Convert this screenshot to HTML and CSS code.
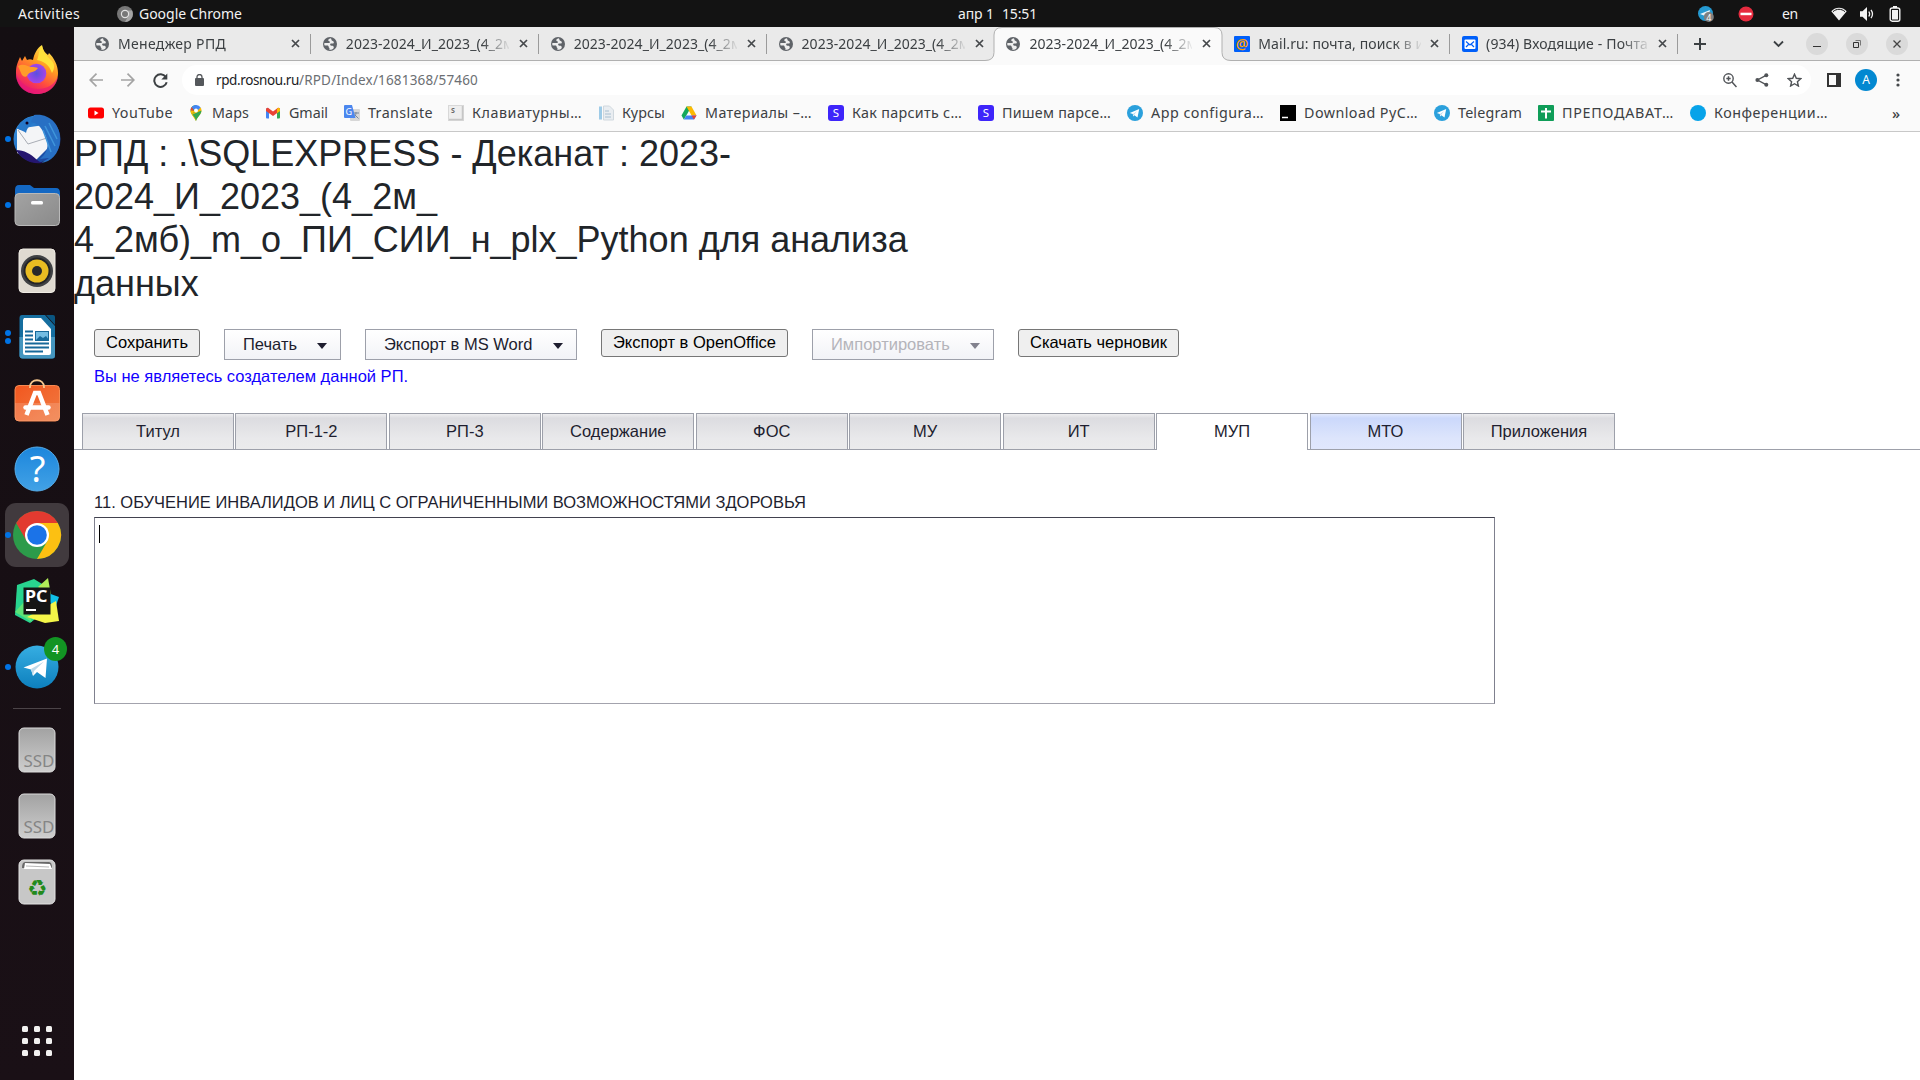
FILE: index.html
```html
<!DOCTYPE html>
<html lang="ru">
<head>
<meta charset="utf-8">
<title>РПД</title>
<link rel="stylesheet" href="styles.css">
</head>
<body>
<svg class="defs" width="0" height="0">
  <symbol id="globe" viewBox="0 0 14 14"><circle cx="7" cy="7" r="7" fill="#5f6368"/><path d="M7.6 1.2C5.8 1.6 5 2.6 5.300 3.600c.3.9 1.500.6 1.700 1.500.2.8-.9 1-1.900 1H2c-.5 0-.8.2-.8.9 0 .5.2 1 .5 1.400h2.500c1 0 1.500.6 1.500 1.500 0 .8.7.8.8 1.500.1.6-.2 1-.4 1.300 1.700.3 3.400-.4 4.500-1.500.4-1 .2-1.700-.5-2.200-.6-.4-1.600-.2-2.400-.5C6.900 8.200 7 7 7.700 6.600c.8-.5 2 .2 2.800-.3.6-.4.300-1.300 0-1.900-.3-.7-1.200-.4-1.700-1C8.300 2.800 8.600 1.700 7.600 1.200z" fill="#eee"/></symbol>
  <symbol id="close" viewBox="0 0 9 9"><path d="M1 1l7 7M8 1L1 8" stroke="#45484b" stroke-width="1.700" fill="none"/></symbol>
  <symbol id="plane" viewBox="0 0 16 16"><circle cx="8" cy="8" r="8" fill="#2ba0dc"/><path d="M2.800 8l9.400-3.900-1.700 8.400-3.100-2.300-1.300 1.300-.3-2.500z" fill="#fff"/><path d="M6 9l4-2.800-2.700 3.300-.7 1.500z" fill="#b9d9ee"/></symbol>
  <symbol id="stepik" viewBox="0 0 16 16"><rect width="16" height="16" rx="3" fill="#3e25fa"/><text x="8" y="12" text-anchor="middle" font-size="11.500" fill="#fff">S</text></symbol>
  <symbol id="ssd" viewBox="0 0 74 66"><rect x="19" y="11" width="36" height="44" rx="5" fill="url(#ssdg)" stroke="#dcdcdc"/><text x="23.500" y="50" font-size="16" textLength="31" lengthAdjust="spacingAndGlyphs" fill="#858585">SSD</text></symbol>
  <linearGradient id="ssdg" x2="0" y2="1"><stop stop-color="#a2a2a2"/><stop offset="1" stop-color="#cecece"/></linearGradient>
  <linearGradient id="ffg" x1=".8" y1="0" x2=".3" y2="1"><stop stop-color="#fff44f"/><stop offset=".4" stop-color="#ff9a22"/><stop offset=".7" stop-color="#ff4a40"/><stop offset="1" stop-color="#e3107c"/></linearGradient>
  <radialGradient id="ffp"><stop stop-color="#5b50df"/><stop offset="1" stop-color="#a544e8"/></radialGradient>
  <linearGradient id="blue" x2="0" y2="1"><stop stop-color="#1c86dc"/><stop offset="1" stop-color="#42a2e6"/></linearGradient>
  <linearGradient id="tgg" x2="0" y2="1"><stop stop-color="#36aee2"/><stop offset="1" stop-color="#0d7fbd"/></linearGradient>
  <linearGradient id="tbg" x2="1" y2="1"><stop stop-color="#3a9be8"/><stop offset=".6" stop-color="#1c5fb4"/><stop offset="1" stop-color="#1b2f8c"/></linearGradient>
  <linearGradient id="filg" x1="0" x2="1" y2="1"><stop stop-color="#a3a3a3"/><stop offset="1" stop-color="#8a8a8a"/></linearGradient>
  <linearGradient id="org" x2="1" y2="1"><stop stop-color="#f2571f"/><stop offset="1" stop-color="#f07b42"/></linearGradient>
</svg>

<header class="panel">
  <div class="panel-left">
    <span class="activities"><span data-w="62">Activities</span></span>
    <svg width="16" height="16" viewBox="0 0 16 16"><circle cx="8" cy="8" r="8" fill="#777"/><path d="M8 4.500h7A8 8 0 0 1 8 16l3.200-6z" fill="#a5a5a5"/><circle cx="8" cy="8" r="4.200" fill="#e2e2e2"/><circle cx="8" cy="8" r="3" fill="#777"/></svg>
    <span data-w="103">Google Chrome</span>
  </div>
  <div class="clock"><span data-w="36">апр 1</span><span data-w="35">15:51</span></div>
  <div class="tray">
    <svg width="16" height="16" viewBox="0 0 16 16"><circle cx="7.500" cy="7.500" r="7.500" fill="#259ad2"/><path d="M2 8l10-4-2 8-3-2z" fill="#e8f4fb"/><circle cx="10.800" cy="11" r="5" fill="#808080"/><text x="10.800" y="14.500" text-anchor="middle" font-size="9" fill="#fff">4</text></svg>
    <svg width="16" height="16" viewBox="0 0 16 16"><circle cx="8" cy="8" r="7.500" fill="#e62b3f"/><rect x="2.500" y="6.700" width="11" height="2.500" fill="#fff"/></svg>
    <span class="lang" data-w="16">en</span>
    <svg width="16" height="14" viewBox="0 0 16 14"><path d="M.3 4.200C4.800-.4 11.200-.4 15.700 4.200L8 13.500z" fill="#f2f2f2"/><path d="M2 4.700c3.500-3.200 8.500-3.200 12 0" stroke="#131313" fill="none"/></svg>
    <svg width="16" height="16" viewBox="0 0 16 16"><path d="M1 5.300h2.500L8 1v14l-4.500-4.300H1z" fill="#f2f2f2"/><path d="M9.800 5.500q1.700 2.500 0 5M12 3.800q3 4.200 0 8.400" stroke="#f2f2f2" stroke-width="1.300" fill="none"/></svg>
    <svg width="12" height="16" viewBox="0 0 12 16"><rect x="1.200" y="2" width="9.600" height="13.200" rx="2" fill="none" stroke="#f2f2f2" stroke-width="1.400"/><path d="M4 0h4v2H4zM3 4h6v9.500H3z" fill="#f2f2f2"/></svg>
  </div>
</header>

<div class="desktop">
<nav class="dock">
  <div class="app"><svg viewBox="0 0 74 66"><path d="M33 11c4 1 4 4 4 4l4-5 2-5 5 8 4 2 3 6 2 6c1 15-8 27-20 27S15 44 16 32l1-9 3-6 2 4 5-3c1-3 5-5 6-7z" fill="none"/><path d="M16 33c0-8 2-11 4-16l2 4 3-5 2 4c2-1 4-1 6 0 1-6 4-12 9-15 1 5 3 8 6 10l1-2c5 5 9 12 9 20 0 12-9 21-21 21S16 45 16 33z" fill="url(#ffg)"/><path d="M16 34c0 11 8 20 21 20 12 0 20-8 21-18-3 8-10 13-20 13S21 44 16 34z" fill="#e71878" opacity=".65"/><circle cx="36.500" cy="33.500" r="9.800" fill="url(#ffp)"/><path d="M42 6c1 6 5 10 9 14 4 4 4 8 1 13-3-9-9-12-15-13 2-4 1-9 5-14z" fill="#ffe23b"/><path d="M18 26c5-3 10 0 13 1 3 0 5 0 7 1-3 5-9 3-11 8-2 2-5 0-6-3z" fill="#ff9c2a"/></svg></div>
  <div class="app"><svg viewBox="0 0 74 66"><circle cx="37" cy="33" r="23.500" fill="url(#tbg)"/><path d="M17 23l27-4 7 20-16 16-18-8z" fill="#f4f5f7"/><path d="M18 24l10 14 19-6" fill="none" stroke="#a9adb5"/><path d="M17 22c6-11 17-15 26-7-9 0-16 5-17 12-3-3-6-2-9-5z" fill="#2678ca"/><path d="M34 9c15-2 27 9 26 26-1 13-9 21-19 22l8-5-9 1c12-10 8-22 0-32-3-4-6-4-9-5z" fill="#2870c4"/><path d="M45 20l10 20M49 17l8 16M43 24l8 22" stroke="#3f95da" stroke-width="1.500"/><path d="M16 44c8 0 15 4 20 9 2 2 4 3 7 4-13 2-23-5-27-13z" fill="#25166f"/><circle cx="27" cy="17" r="1.500" fill="#102"/></svg><i class="dot"></i></div>
  <div class="app"><svg viewBox="0 0 74 66"><path d="M15 18q0-5 4-5h11l4 3h22q4 0 4 5v10H15z" fill="#1468c3"/><rect x="15" y="21.500" width="44.500" height="32" rx="4" fill="url(#filg)" stroke="#b9b9b9"/><rect x="31" y="29" width="12" height="3.500" rx="1.500" fill="#fff"/></svg><i class="dot"></i></div>
  <div class="app"><svg viewBox="0 0 74 66"><rect x="19" y="11" width="36" height="43.500" rx="4" fill="#dfdad1" stroke="#efebe3"/><circle cx="37" cy="33" r="16" fill="#3f4144"/><circle cx="37" cy="33" r="13.500" fill="#232427"/><circle cx="37" cy="33" r="11.500" fill="#e9bc22"/><circle cx="37" cy="33" r="5" fill="#28292b"/></svg></div>
  <div class="app"><svg viewBox="0 0 74 66"><path d="M22 11h23l10 11v30q0 2.500-2.500 2.500h-30q-3 0-3-3V14q0-3 2.500-3z" fill="#166e9f"/><path d="M19.500 33h35.500v18q0 3.500-3 3.500H22.500q-3 0-3-3z" fill="#4596bf"/><path d="M24 14h17l10 11v24q0 2-2 2H25q-2 0-2-2V16z" fill="#fff"/><path d="M46 11h7q2 0 2 2v8z" fill="#0a5580"/><path d="M25 27.500h8M25 31.500h8M25 35.500h8M25 39.500h24M25 43.500h24M25 47.500h18" stroke="#17699a" stroke-width="1.800"/><rect x="35.500" y="27.500" width="13" height="9" fill="#73bce2" stroke="#17699a"/><path d="M36 36l4-4 3 2 3-2 3 4z" fill="#17699a"/></svg><i class="dot up"></i><i class="dot down"></i></div>
  <div class="app"><svg viewBox="0 0 74 66"><rect x="15" y="15.500" width="44.500" height="35.500" rx="4" fill="url(#org)" stroke="#f78a52"/><path d="M15 33h44.500v14q0 4-4 4H19q-4 0-4-4z" fill="#fff" opacity=".16"/><path d="M30 18v-1c0-9 14-9 14 0v1" fill="none" stroke="#f7c88f" stroke-width="1.800"/><path d="M26.500 45l8.500-22h4l8.500 22" fill="none" stroke="#fff" stroke-width="4.500"/><path d="M25.500 37.500h23" stroke="#fff" stroke-width="4.500" stroke-linecap="round"/></svg></div>
  <div class="app"><svg viewBox="0 0 74 66"><circle cx="37" cy="33" r="22" fill="url(#blue)" stroke="#55ace9"/><text x="37.500" y="46" text-anchor="middle" font-size="36" fill="#fff">?</text></svg></div>
  <div class="app current"><svg viewBox="0 0 74 66"><circle cx="37" cy="33" r="24" fill="#2c9b4a"/><path d="M16.200 21A24 24 0 0 1 57.800 21H37L26.600 39z" fill="#e23a30"/><path d="M57.800 21A24 24 0 0 1 37 57L47.400 39 37 21z" fill="#fcc012"/><circle cx="37" cy="33" r="12" fill="#fff"/><circle cx="37" cy="33" r="9.800" fill="#1b73e8"/></svg><i class="dot"></i></div>
  <div class="app"><svg viewBox="0 0 74 66"><path d="M17 17l17-6 13 8-4 26-13 10-15-8z" fill="#28d48f"/><path d="M38 19l10-9 3 17z" fill="#b0ec58"/><path d="M48 25l11 4-6 17z" fill="#10c1e8"/><path d="M15 44l9-10 8 20z" fill="#5ee476"/><path d="M27 49l29-16 3 20-14 2z" fill="#f4f648"/><rect x="23.500" y="19.500" width="27" height="27" fill="#151515"/><text x="25" y="34" font-size="15.500" font-weight="700" textLength="22.500" lengthAdjust="spacingAndGlyphs" fill="#fff">PC</text><path d="M26 42h10" stroke="#fff" stroke-width="2"/></svg></div>
  <div class="app"><svg viewBox="0 0 74 66"><circle cx="37" cy="33" r="21.500" fill="url(#tgg)"/><path d="M23.500 33.500L47 24.500 45.500 44l-8.500-6-4 4-2-6.500z" fill="#fff"/><path d="M31 35l13-7.500-10 9.500-1 4.500z" fill="#bcd9e9"/></svg><i class="dot"></i><b class="badge">4</b></div>
  <hr>
  <div class="app"><svg><use href="#ssd"/></svg></div>
  <div class="app"><svg><use href="#ssd"/></svg></div>
  <div class="app"><svg viewBox="0 0 74 66"><rect x="19" y="11" width="36" height="44" rx="5" fill="#c7c7c7" stroke="#e3e3e3"/><path d="M22 19q0-6 3-6h24q3 0 3 6z" fill="#686868"/><path d="M24 20l1-6 25 1 2 5z" fill="#fff"/><path d="M26 17l23 1" stroke="#999" stroke-width=".7"/><text class="recycle" x="37" y="47" text-anchor="middle" font-size="22.500" fill="#228a1c">♻</text></svg></div>
  <div class="app grid"><svg viewBox="0 0 74 66"><g fill="#f2f1f0"><rect x="22" y="18" width="6" height="6" rx="1.500"/><rect x="34" y="18" width="6" height="6" rx="1.500"/><rect x="46" y="18" width="6" height="6" rx="1.500"/><rect x="22" y="30" width="6" height="6" rx="1.500"/><rect x="34" y="30" width="6" height="6" rx="1.500"/><rect x="46" y="30" width="6" height="6" rx="1.500"/><rect x="22" y="42" width="6" height="6" rx="1.500"/><rect x="34" y="42" width="6" height="6" rx="1.500"/><rect x="46" y="42" width="6" height="6" rx="1.500"/></g></svg></div>
</nav>

<main class="browser">
  <div class="tabs">
    <div class="tab"><svg class="fav"><use href="#globe"/></svg><span class="title"><span data-w="108">Менеджер РПД</span></span><svg class="x"><use href="#close"/></svg></div>
    <div class="tab"><svg class="fav"><use href="#globe"/></svg><span class="title"><span data-w="168">2023-2024_И_2023_(4_2м</span></span><svg class="x"><use href="#close"/></svg></div>
    <div class="tab"><svg class="fav"><use href="#globe"/></svg><span class="title"><span data-w="168">2023-2024_И_2023_(4_2м</span></span><svg class="x"><use href="#close"/></svg></div>
    <div class="tab nosep"><svg class="fav"><use href="#globe"/></svg><span class="title"><span data-w="168">2023-2024_И_2023_(4_2м</span></span><svg class="x"><use href="#close"/></svg></div>
    <div class="tab nosep active"><svg class="shape" viewBox="0 0 246 34"><path d="M0 33.500Q9 33.500 9 25.500V8Q9 .5 17 .5H229Q237 .5 237 8V25.500Q237 33.500 246 33.500V34H0z" fill="#fafafa"/><path d="M0 33.500Q9 33.500 9 25.500V8Q9 .5 17 .5H229Q237 .5 237 8V25.500Q237 33.500 246 33.500" fill="none" stroke="#b0b0b0"/></svg><svg class="fav"><use href="#globe"/></svg><span class="title"><span data-w="168">2023-2024_И_2023_(4_2м</span></span><svg class="x"><use href="#close"/></svg></div>
    <div class="tab"><svg class="fav wide" viewBox="0 0 16 16"><rect width="16" height="16" rx="1" fill="#005ff9"/><text x="8" y="12.500" text-anchor="middle" font-size="14" font-weight="600" fill="#ff9e00">@</text></svg><span class="title"><span data-w="166">Mail.ru: почта, поиск в и</span></span><svg class="x"><use href="#close"/></svg></div>
    <div class="tab"><svg class="fav wide" viewBox="0 0 16 16"><rect width="16" height="16" rx="2" fill="#005ff9"/><rect x="2.500" y="3.500" width="11" height="9.500" rx="1" fill="#fff"/><path d="M4 5.500l4 3.500 4-3.500M4 11l2.500-2.500M12 11L9.500 8.500" stroke="#005ff9" stroke-width="1.200" fill="none"/></svg><span class="title"><span data-w="162">(934) Входящие - Почта</span></span><svg class="x"><use href="#close"/></svg></div>
    <svg class="plus" width="12" height="12" viewBox="0 0 12 12"><path d="M6 0v12M0 6h12" stroke="#3c4043" stroke-width="2"/></svg>
    <div class="winctl">
      <svg class="chev" width="11" height="8" viewBox="0 0 11 8"><path d="M1 1.500l4.500 4.500L10 1.500" stroke="#3c4043" stroke-width="1.800" fill="none"/></svg>
      <span class="round"><svg viewBox="0 0 22 22"><path d="M7 13.500h8" stroke="#333"/></svg></span>
      <span class="round"><svg viewBox="0 0 22 22"><path d="M7.500 9.500h5v5h-5z" stroke="#333" fill="none"/><path d="M9.500 7.500h5v5" stroke="#777" fill="none"/></svg></span>
      <span class="round"><svg viewBox="0 0 22 22"><path d="M7.500 7.500l7 7M14.500 7.500l-7 7" stroke="#444" stroke-width="1.300"/></svg></span>
    </div>
  </div>

  <div class="toolbar">
    <svg width="14" height="14" viewBox="0 0 14 14"><path d="M14 7H1.500M7.500.7L1.200 7l6.300 6.300" stroke="#a4a4a4" stroke-width="1.700" fill="none"/></svg>
    <svg width="14" height="14" viewBox="0 0 14 14"><path d="M0 7h12.500M6.500.7L12.800 7l-6.300 6.300" stroke="#a4a4a4" stroke-width="1.700" fill="none"/></svg>
    <svg width="15" height="15" viewBox="0 0 15 15"><path d="M12.800 4A6.300 6.300 0 1 0 13.700 9.200" stroke="#3c4043" stroke-width="2" fill="none"/><path d="M14.300.5v6H8.300z" fill="#3c4043"/></svg>
    <div class="omnibox">
      <svg width="9" height="12" viewBox="0 0 9 12"><rect y="4" width="9" height="8" rx="1" fill="#55585c"/><path d="M2 5V3a2.500 2.500 0 0 1 5 0v2" stroke="#55585c" stroke-width="1.300" fill="none"/></svg>
      <span class="url"><span class="host" data-w="83">rpd.rosnou.ru</span><span data-w="179">/RPD/Index/1681368/57460</span></span>
      <svg class="first" width="14" height="15" viewBox="0 0 14 15"><circle cx="5.500" cy="5.500" r="4.700" stroke="#505357" stroke-width="1.400" fill="none"/><path d="M9 9l4.500 5M5.500 3.300v4.400M3.300 5.500h4.400" stroke="#505357" stroke-width="1.500"/></svg>
      <svg width="14" height="14" viewBox="0 0 14 14"><path d="M11.500 2.200L2.500 7l9 4.800" stroke="#505357" stroke-width="1.400" fill="none"/><circle cx="11.300" cy="2.200" r="2" fill="#505357"/><circle cx="2.400" cy="7" r="2" fill="#505357"/><circle cx="11.300" cy="11.800" r="2" fill="#505357"/></svg>
      <svg width="15" height="14" viewBox="0 0 15 14"><path d="M7.500 1.200l1.800 4.100 4.400.4-3.300 3 1 4.300-3.900-2.300L3.600 13l1-4.300-3.300-3 4.400-.4z" stroke="#505357" stroke-width="1.400" fill="none"/></svg>
    </div>
    <svg class="side" width="14" height="14" viewBox="0 0 14 14"><path d="M1 1h12v12H1z" fill="none" stroke="#333" stroke-width="2"/><path d="M9 1h4v12H9z" fill="#333"/></svg>
    <span class="avatar">А</span>
    <svg class="menu" width="4" height="14" viewBox="0 0 4 14"><circle cx="2" cy="2" r="1.600" fill="#45484b"/><circle cx="2" cy="7" r="1.600" fill="#45484b"/><circle cx="2" cy="12" r="1.600" fill="#45484b"/></svg>
  </div>

  <div class="bookmarks">
    <a><svg viewBox="0 0 16 16"><rect y="2.500" width="16" height="11" rx="2.500" fill="#f00"/><path d="M6.500 5.500v5l4-2.500z" fill="#fff"/></svg><span data-w="61">YouTube</span></a>
    <a><svg viewBox="0 0 16 16"><path d="M8 16C7 12 2.500 9.500 2.500 5.500A5.500 5.500 0 0 1 8 0z" fill="#34a853"/><path d="M8 16c1-4 5.500-6.500 5.500-10.500A5.500 5.500 0 0 0 12.500 2.300L3.800 9.500z" fill="#fbbc04"/><path d="M13.400 5.500c0 4-3.900 6-5.400 10.500-.5-3-2-4.500-3.500-6.500z" fill="#34a853"/><path d="M3.500 2.300A5.500 5.500 0 0 1 12.600 2.500L8 7z" fill="#4285f4"/><path d="M3.800 1.900A5.500 5.500 0 0 0 2.500 5.500L6 6z" fill="#ea4335"/><path d="M2.500 5.500c0 1.500.5 2.800 1.300 4L7 6z" fill="#fbbc04"/><circle cx="8" cy="5.500" r="2" fill="#fff"/></svg><span data-w="37">Maps</span></a>
    <a><svg viewBox="0 0 16 16"><path d="M1 3.500h3V13.500H2q-1 0-1-1z" fill="#4285f4"/><path d="M12 3.500h3v9q0 1-1 1h-2z" fill="#34a853"/><path d="M1 4.500q0-2 2-1.700L8 6.500l5-3.700q2-.3 2 1.700v1.500L8 11 1 6z" fill="#ea4335"/><path d="M12 3.800l1.500-1q1.500.2 1.500 1.700V6l-3 2.200z" fill="#fbbc04"/></svg><span data-w="39">Gmail</span></a>
    <a><svg viewBox="0 0 16 16"><rect x="6" y="4" width="10" height="12" rx="1" fill="#d7d7d7"/><path d="M9.500 8h5.500M12 7v1c0 2-1.500 4-3 5M10.500 9.500l4 4" stroke="#77869b" fill="none"/><path d="M1 0h7l3.500 13H1q-1 0-1-1V1q0-1 1-1z" fill="#4b87ee"/><text x="1.500" y="10" font-size="9" fill="#fff">G</text></svg><span data-w="65">Translate</span></a>
    <a><svg viewBox="0 0 16 16"><rect x=".5" y=".5" width="15" height="15" fill="#eee" stroke="#d8d8d8"/><path d="M14.500 1v13.500H1" stroke="#c6c6c6" stroke-width="1.500" fill="none"/><text x="3" y="8" font-size="7" font-weight="700" fill="#666">S</text></svg><span data-w="110">Клавиатурны…</span></a>
    <a><svg viewBox="0 0 16 16"><path d="M1 1.500h3v13H1z" fill="#9ecbe7"/><path d="M5.500 1h6l4 4v10h-10z" fill="#e9edf1" stroke="#d0d8de"/><path d="M7 6h4M7 9h6M7 12h6" stroke="#a8bfd0"/></svg><span data-w="43">Курсы</span></a>
    <a><svg viewBox="0 0 16 16"><path d="M5.500 1.500h5L5.300 10.500l-2.500 4L.5 10.500z" fill="#14a85c"/><path d="M5.500 1.500h5l5 9H10.500z" fill="#fcba03"/><path d="M5.300 10.500h10.200l-2.500 4H2.800z" fill="#4285f4"/><path d="M10.500 10.500h5l-2.500 4z" fill="#e94335"/></svg><span data-w="107">Материалы –…</span></a>
    <a><svg><use href="#stepik"/></svg><span data-w="110">Как парсить с…</span></a>
    <a><svg><use href="#stepik"/></svg><span data-w="109">Пишем парсе…</span></a>
    <a><svg><use href="#plane"/></svg><span data-w="113">App configura…</span></a>
    <a><svg viewBox="0 0 16 16"><path d="M0 0h16v16H0z"/><path d="M2 12.500h6" stroke="#fff" stroke-width="1.500"/></svg><span data-w="114">Download PyC…</span></a>
    <a><svg><use href="#plane"/></svg><span data-w="64">Telegram</span></a>
    <a><svg viewBox="0 0 16 16"><rect width="16" height="16" rx="1" fill="#0f9d58"/><path d="M8 3v10.500M3 6.500h10" stroke="#fff" stroke-width="2"/></svg><span data-w="112">ПРЕПОДАВАТ…</span></a>
    <a><svg viewBox="0 0 16 16"><circle cx="8" cy="8" r="8" fill="#07a3e9"/></svg><span data-w="114">Конференции…</span></a>
    <b>»</b>
  </div>

  <section class="page">
    <h1>РПД : .\SQLEXPRESS - Деканат : 2023-2024_И_2023_(4_2м_ 4_2мб)_m_o_ПИ_СИИ_н_plx_Python для анализа данных</h1>
    <div class="actions">
      <button class="w-save">Сохранить</button>
      <div class="drop w-print"><span>Печать</span><i></i></div>
      <div class="drop w-word"><span>Экспорт в MS Word</span><i></i></div>
      <button class="w-office">Экспорт в OpenOffice</button>
      <div class="drop w-import off"><span>Импортировать</span><i></i></div>
      <button class="w-draft">Скачать черновик</button>
    </div>
    <p class="note">Вы не являетесь создателем данной РП.</p>
    <div class="sheet-tabs">
      <span>Титул</span><span>РП-1-2</span><span>РП-3</span><span>Содержание</span><span>ФОС</span><span>МУ</span><span>ИТ</span><span class="on">МУП</span><span class="hover">МТО</span><span>Приложения</span>
    </div>
    <p class="caption">11. ОБУЧЕНИЕ ИНВАЛИДОВ И ЛИЦ С ОГРАНИЧЕННЫМИ ВОЗМОЖНОСТЯМИ ЗДОРОВЬЯ</p>
    <div class="editor"><i class="caret"></i></div>
  </section>
</main>
</div>
<script src="fit.js"></script>
</body>
</html>
```
FILE: styles.css
```css
* { box-sizing: border-box; }
body {
  margin: 0;
  width: 1920px;
  height: 1080px;
  overflow: hidden;
  background: #fff;
  font-family: "Noto Sans", "Open Sans", sans-serif;
  font-size: 14px;
  color: #3c4043;
}
svg { display: block; flex: none; }
.defs { position: absolute; }
[data-w] { display: inline-block; white-space: pre; }

/* system panel */
.panel {
  height: 27px;
  background: #131313;
  color: #f2f2f2;
  display: grid;
  grid-template-columns: 1fr auto 1fr;
  align-items: center;
}
.panel-left { display: flex; align-items: center; padding-left: 18px; }
.activities { width: 99px; }
.panel-left svg { margin-right: 6px; }
.clock { display: flex; gap: 8px; width: 152px; padding-left: 74px; }
.tray { display: flex; align-items: center; justify-content: flex-end; padding-right: 19px; }
.tray svg:nth-child(1) { margin-right: 24px; }
.tray svg:nth-child(2) { margin-right: 28px; }
.lang { margin-right: 33px; }
.tray svg:nth-child(4) { margin-right: 12px; }
.tray svg:nth-child(5) { margin-right: 14px; }

.desktop { display: flex; height: 1053px; }

/* dock */
.dock {
  width: 74px;
  flex: none;
  padding-top: 13px;
  background: linear-gradient(#140e12, #1a1016);
  display: flex;
  flex-direction: column;
}
.app { position: relative; width: 74px; height: 66px; flex: none; }
.app svg { position: relative; width: 74px; height: 66px; }
.app.current::before {
  content: "";
  position: absolute;
  left: 5px;
  top: 1px;
  width: 64px;
  height: 64px;
  border-radius: 11px;
  background: #413a3e;
}
.dot { position: absolute; left: 5px; top: 30px; width: 6px; height: 6px; border-radius: 50%; background: #0073e5; }
.dot.up { top: 26px; }
.dot.down { top: 34px; }
.badge {
  position: absolute;
  left: 44px;
  top: 3px;
  width: 23px;
  height: 24px;
  border-radius: 50%;
  background: #129423;
  color: #fff;
  font: 13px/24px "Noto Sans", sans-serif;
  text-align: center;
}
.dock hr { width: 48px; height: 1px; border: 0; margin: 8px auto; background: #4b4448; }
.app.grid { margin-top: 93px; }
.recycle { font-family: "DejaVu Sans", sans-serif; }

/* browser chrome */
.browser { flex: 1; background: #fff; }
.tabs {
  height: 34px;
  display: flex;
  align-items: center;
  background: #eaeaea;
  border-bottom: 1px solid #b0b0b0;
  padding-left: 9px;
}
.tab { position: relative; flex: none; width: 227.850px; height: 33px; padding-left: 12px; display: flex; align-items: center; }
.tab::after { content: ""; position: absolute; right: 0; top: 7px; width: 1px; height: 20px; background: #9b9b9b; }
.tab.nosep::after { display: none; }
.tab .shape { position: absolute; left: -9px; top: 0; width: 246px; height: 34px; }
.tab .fav { position: relative; width: 14px; height: 14px; margin-right: 9px; }
.tab .fav.wide { width: 16px; height: 16px; margin-right: 8px; }
.title {
  position: relative;
  width: 163px;
  margin-right: 10px;
  overflow: hidden;
  white-space: nowrap;
  -webkit-mask-image: linear-gradient(90deg, #000 136px, transparent 165px);
  mask-image: linear-gradient(90deg, #000 136px, transparent 165px);
}
.tab .wide + .title { margin-right: 9px; }
.tab .x { position: relative; width: 9px; height: 9px; }
.plus { margin-left: 16px; }
.winctl { margin-left: auto; display: flex; align-items: center; padding-right: 12px; gap: 18px; }
.chev { margin-right: 4px; }
.round { width: 22px; height: 22px; border-radius: 50%; background: #dadada; }

.toolbar { height: 38px; background: #fafafa; display: flex; align-items: center; padding-left: 15px; }
.toolbar > svg:nth-child(-n+2) { margin-right: 18px; }
.toolbar > svg:nth-child(3) { margin-right: 14px; }
.omnibox {
  width: 1629px;
  height: 30px;
  border-radius: 15px;
  background: #fff;
  display: flex;
  align-items: center;
  padding: 0 9px 0 13px;
}
.url { margin-left: 12px; font-size: 13.500px; color: #6c6f73; display: flex; }
.host { color: #1c1d1f; }
.omnibox .first { margin-left: auto; }
.omnibox svg + svg { margin-left: 18px; }
.side { margin-left: 16px; }
.avatar {
  width: 22px;
  height: 22px;
  margin: 0 19px 0 14px;
  border-radius: 50%;
  background: #0288d1;
  color: #fff;
  font-size: 12px;
  line-height: 22px;
  text-align: center;
}

.bookmarks {
  height: 33px;
  padding: 0 0 5px 14px;
  background: #fafafa;
  border-bottom: 1px solid #c8c8c8;
  display: grid;
  grid-template-columns: 100px 77px 79px 104px 150px 83px 147px 150px 149px 153px 154px 104px 152px 202px auto;
  align-items: center;
}
.bookmarks a { display: flex; align-items: center; gap: 8px; font-size: 14.300px; }
.bookmarks a svg { width: 16px; height: 16px; }
.bookmarks b { font-weight: 500; font-size: 15px; line-height: 20px; }

/* document */
.page { font-family: "Liberation Sans", Arial, sans-serif; font-size: 16.500px; color: #1e1e2f; }
.page h1 { margin: 0; width: 850px; font-size: 36px; font-weight: 400; line-height: 43.200px; color: #212529; }
.actions { display: flex; align-items: flex-start; gap: 24px; padding: 24px 0 0 20px; height: 55px; }
.actions button {
  height: 28px;
  padding: 0;
  border: 1px solid #767676;
  border-radius: 3px;
  background: #efefef;
  font: 16.500px "Liberation Sans", Arial, sans-serif;
  color: #000;
}
.drop {
  height: 31px;
  display: flex;
  align-items: center;
  justify-content: space-between;
  padding: 1px 13px 0 18px;
  border: 1px solid #9da0aa;
  background: linear-gradient(#fff, #f2f3f7);
}
.drop i { border: 5.500px solid transparent; border-top: 6px solid #1e1e2f; border-bottom: 0; margin-top: 2px; }
.off { color: #b4b4ba; }
.drop.off i { border-top-color: #82828e; }
.w-save { width: 106px; }
.w-print { width: 117px; }
.w-word { width: 212px; }
.w-office { width: 187px; }
.w-import { width: 182px; }
.w-draft { width: 161px; }
.note { margin: 6px 0 0 20px; line-height: 20px; color: #1200ff; }
.sheet-tabs {
  display: flex;
  gap: 1.450px;
  height: 37px;
  margin-top: 27px;
  padding-left: 8px;
  border-bottom: 1px solid #9da0aa;
}
.sheet-tabs span {
  width: 152px;
  height: 36px;
  border: 1px solid #9da0aa;
  border-bottom: 0;
  line-height: 35px;
  text-align: center;
  background: linear-gradient(#eeeef0, #dcdce0 12%, #e9e9eb 70%, #ebebec);
}
.sheet-tabs .on { height: 37px; background: #fff; }
.sheet-tabs .hover { background: linear-gradient(#e2e9fd, #cbd8fb 12%, #dde5fc 70%, #e0e7fd); }
.caption { margin: 42px 0 0 20px; line-height: 20px; }
.editor {
  width: 1401px;
  height: 187px;
  margin: 5px 0 0 20px;
  border: 1px solid #7f808e;
  border-top-color: #42424f;
  border-bottom-color: #a3a3ad;
  padding: 7px 0 0 4px;
}
.caret { display: block; width: 1px; height: 18px; background: #000; }
```
FILE: fit.js
```js
// Spread each label's letters so that it takes exactly its reserved width.
document.querySelectorAll('[data-w]').forEach(function (el) {
  var target = parseFloat(el.dataset.w);
  var gap = (target - el.getBoundingClientRect().width) / el.textContent.length;
  el.style.letterSpacing = gap.toFixed(3) + 'px';
});
```
